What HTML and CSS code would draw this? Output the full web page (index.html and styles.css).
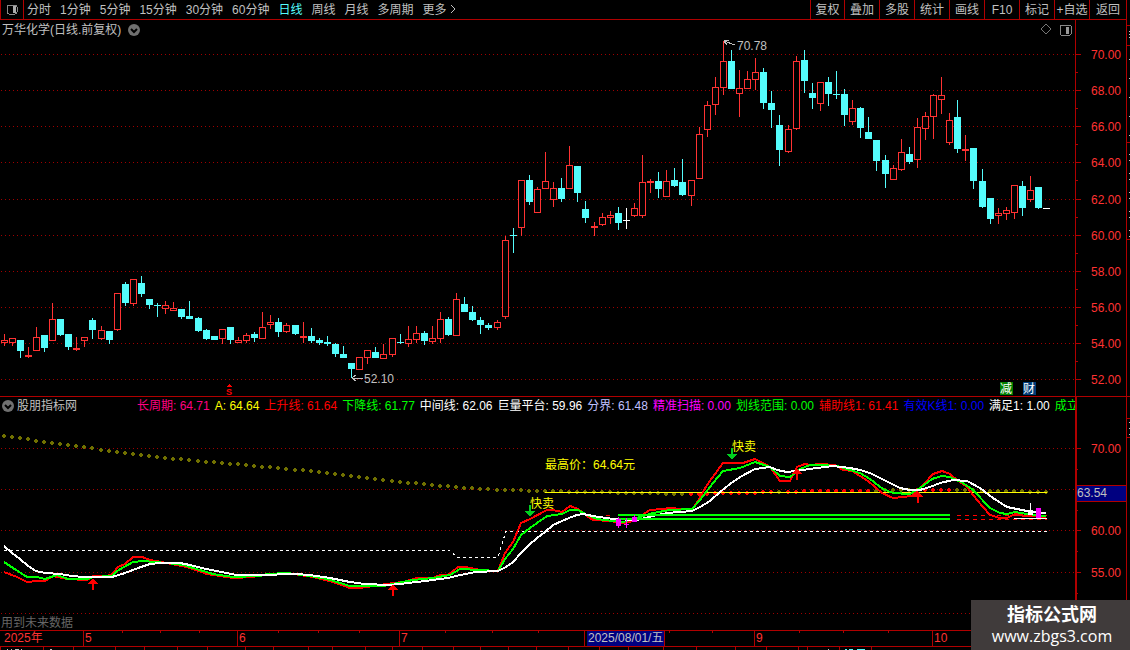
FILE: index.html
```
<!DOCTYPE html>
<html lang="zh-CN">
<head>
  <meta charset="UTF-8">
  <title>万华化学 日线</title>
  <meta name="viewport" content="width=device-width, initial-scale=1.0">
  <link rel="stylesheet" href="styles.css">
</head>
<body>

<div class="terminal">

  <header class="toolbar">
    <button class="layout-btn" aria-label="布局">
      <svg width="12" height="11"><rect x="1" y="1" width="10" height="9" rx="2" fill="none" stroke="#888" stroke-width="1"/><rect x="7" y="2" width="3" height="7" fill="#aaa"/></svg>
    </button>
    <nav class="periods">
      <button>分时</button>
      <button>1分钟</button>
      <button>5分钟</button>
      <button>15分钟</button>
      <button>30分钟</button>
      <button>60分钟</button>
      <button class="active">日线</button>
      <button>周线</button>
      <button>月线</button>
      <button>多周期</button>
      <button>更多 <svg width="6" height="9"><path d="M1 0L5 4L1 8" fill="none" stroke="#c0c0c0"/></svg></button>
    </nav>
    <div class="tools">
      <button>复权</button>
      <button>叠加</button>
      <button>多股</button>
      <button>统计</button>
      <button>画线</button>
      <button>F10</button>
      <button>标记</button>
      <button>+自选</button>
      <button>返回</button>
    </div>
  </header>

  <section class="panel price">
    <div class="panel-head">
      <h1>万华化学(日线.前复权)</h1>
      <button class="chevron" aria-label="展开"><svg width="12" height="12"><circle cx="6" cy="6" r="6" fill="#707070"/><path d="M3 5L6 8L9 5" fill="none" stroke="#000" stroke-width="2"/></svg></button>
      <div class="head-icons">
        <button aria-label="标志"><svg width="11" height="11"><path d="M5 0L10 5L5 10L0 5Z" fill="none" stroke="#777"/></svg></button>
        <button aria-label="侧栏"><svg width="13" height="12"><rect x="1" y="1" width="11" height="10" rx="1" fill="none" stroke="#888"/><rect x="7" y="3" width="3" height="7" fill="#999"/></svg></button>
      </div>
    </div>
    <svg class="plot price-plot" aria-label="K线图">
      <defs>
        <pattern id="dots" width="4" height="1" patternUnits="userSpaceOnUse"><rect x="1" width="1" height="1" fill="#a00000"/></pattern>
      </defs>
      <!-- drawn in screen rows, the header takes the first 38 -->
      <g transform="translate(0 -38)">
        <g id="price-grid"></g>
        <g id="candles"></g>
        <path class="pointer" d="M724 41L735 45M724 41L729 40M724 41L727 45"/>
        <text class="gray" x="737" y="50">70.78</text>
        <path class="pointer" d="M352 378H363M352 378L356 375M352 378L356 381"/>
        <text class="gray" x="364" y="383">52.10</text>
        <path d="M226 387L229 384L232 387Z" fill="#ff0000"/>
        <text class="s-mark" x="226" y="395">S</text>
        <rect x="1000" y="382" width="13" height="13" fill="#008000"/>
        <text class="white" x="1000" y="393">减</text>
        <rect x="1023" y="382" width="13" height="13" fill="#003c78"/>
        <text class="white" x="1023" y="393">财</text>
      </g>
    </svg>
  </section>
  <svg class="axis price-axis" id="price-axis" viewBox="0 20 50 376"></svg>

  <section class="panel indicator">
    <div class="panel-head">
      <button class="chevron" aria-label="展开"><svg width="12" height="12"><circle cx="6" cy="6" r="6" fill="#707070"/><path d="M3 5L6 8L9 5" fill="none" stroke="#000" stroke-width="2"/></svg></button>
      <h2>股朋指标网</h2>
      <div class="values">
        <span class="pink">长周期: 64.71</span>
        <span class="yellow">A: 64.64</span>
        <span class="red">上升线: 61.64</span>
        <span class="green">下降线: 61.77</span>
        <span class="white">中间线: 62.06</span>
        <span class="white">巨量平台: 59.96</span>
        <span class="lilac">分界: 61.48</span>
        <span class="magenta">精准扫描: 0.00</span>
        <span class="green">划线范围: 0.00</span>
        <span class="red">辅助线1: 61.41</span>
        <span class="blue">有效K线1: 0.00</span>
        <span class="white">满足1: 1.00</span>
        <span class="green">成立</span>
      </div>
    </div>
    <svg class="plot indicator-plot" aria-label="指标图">
      <g transform="translate(0 -414)">
        <g id="indicator-grid"></g>
        <g id="long-cycle"></g>
        <rect x="545" y="492" width="502" height="1" fill="#ffff00"/>
        <path class="platform" d="M4 550H449L457 557H498L506 531H1047"/>
        <rect x="606" y="515" width="4" height="1" fill="#ff0000"/>
        <path class="helper" d="M957 515H1047M957 519H1047"/>
        <g id="lines"></g>
        <rect x="618" y="514" width="332" height="2" fill="#00ff00"/>
        <rect x="618" y="518" width="332" height="2" fill="#00ff00"/>
        <rect x="1014" y="518" width="33" height="1" fill="#fff"/>
        <g fill="#ff00ff">
          <rect x="616" y="519" width="5" height="7"/><rect x="618" y="517" width="1" height="11"/>
          <rect x="624" y="524" width="5" height="1"/><rect x="626" y="518" width="1" height="10"/>
          <rect x="632" y="517" width="5" height="5"/><rect x="634" y="515" width="1" height="7"/>
          <rect x="1036" y="508" width="5" height="10"/>
        </g>
        <rect x="1028" y="510" width="5" height="5" fill="#fff"/>
        <rect x="1030" y="503" width="1" height="8" fill="#fff"/>
        <g id="arrows"></g>
        <text class="yellow" x="530" y="508">快卖</text>
        <text class="yellow" x="732" y="451">快卖</text>
        <text class="yellow" x="545" y="469">最高价：64.64元</text>
        <text class="dim" x="1" y="627">用到未来数据</text>
      </g>
    </svg>
  </section>
  <svg class="axis indicator-axis" id="indicator-axis" viewBox="1 397 49 233"></svg>

  <footer class="timeline">
    <svg class="ticks" id="time-ticks"></svg>
    <ol>
      <li>2025年</li>
      <li>5</li>
      <li>6</li>
      <li>7</li>
      <li><time class="cursor-date" datetime="2025-08-01">2025/08/01/五</time></li>
      <li>9</li>
      <li>10</li>
    </ol>
  </footer>
  <svg class="ticker" id="ticker"></svg>

  <svg class="side" id="side" viewBox="0 0 3 650"></svg>

  <div class="watermark">
    <strong>指标公式网</strong>
    <a href="#">www.zbgs3.com</a>
  </div>
</div>

<script src="chart.js"></script>
</body>
</html>
```
FILE: styles.css
```
* {
  box-sizing: border-box;
}

body {
  margin: 0;
  background: #000;
  color: #c0c0c0;
  font-family: "Liberation Sans", "Noto Sans CJK SC", sans-serif;
  font-size: 12px;
  line-height: 16px;
}

button {
  background: none;
  border: none;
  padding: 0;
  color: inherit;
  font: inherit;
  cursor: pointer;
  white-space: nowrap;
}

svg {
  display: block;
  shape-rendering: crispEdges;
}

h1, h2 {
  margin: 0;
  font-size: 12px;
  font-weight: normal;
  white-space: nowrap;
}

.terminal {
  position: relative;
  display: grid;
  grid-template-columns: minmax(0, 1fr) 51px 4px;
  grid-template-rows: auto auto auto auto 3px;
  overflow: hidden;
}

/* toolbar */
.toolbar {
  grid-column: 1 / 3;
  display: flex;
  height: 20px;
  border-bottom: 1px solid #b00000;
}

.layout-btn {
  display: flex;
  align-items: center;
  justify-content: center;
  width: 24px;
  border-left: 1px solid #b00000;
  border-right: 1px solid #b00000;
}

.periods {
  display: flex;
  gap: 9px;
  padding-left: 3px;
}

.periods svg {
  display: inline-block;
}

.periods .active {
  color: #54fcfc;
}

.tools {
  display: flex;
  margin-left: auto;
}

.tools button {
  width: 35px;
  border-left: 1px solid #b00000;
}

.tools button:first-child {
  width: 34px;
}

.tools button:last-child {
  width: 37px;
}

/* panels */
.panel {
  min-width: 0;
}

.panel-head {
  display: flex;
  align-items: center;
}

.price {
  border-bottom: 1px solid #b00000;
}

.price .panel-head {
  height: 18px;
  gap: 7px;
  padding: 1px 3px 0 2px;
}

.head-icons {
  display: flex;
  gap: 7px;
  margin-left: auto;
}

.indicator .panel-head {
  height: 17px;
  gap: 3px;
  padding-left: 2px;
}

.chevron svg,
.chevron path,
.head-icons path {
  shape-rendering: auto;
}

.values {
  display: flex;
  gap: 5px;
  margin-left: 57px;
  overflow: hidden;
  white-space: nowrap;
}

.plot {
  width: 100%;
}

.price-plot {
  height: 358px;
}

.indicator-plot {
  height: 216px;
}

.axis {
  border-left: 1px solid #b00000;
}

.price-axis {
  width: 51px;
  height: 377px;
  border-bottom: 1px solid #b00000;
}

.indicator-axis {
  width: 51px;
  height: 233px;
  border-left-width: 2px;
}

.side {
  grid-column: 3;
  grid-row: 1 / 6;
  width: 4px;
  height: 650px;
  border-left: 1px solid #b00000;
}

text {
  font-size: 12px;
  fill: #ff3232;
}

.gray { fill: #c0c0c0; }
.dim { fill: #666; }
.pink { color: #ff0080; }
.red { color: #ff0000; }
.green { color: #00ff00; }
.white { color: #fff; fill: #fff; }
.yellow { color: #ffff00; fill: #ffff00; }
.lilac { color: #c0c0ff; }
.magenta { color: #ff00ff; }
.blue { color: #0000ff; }

.s-mark {
  font-size: 9px;
  font-weight: bold;
  fill: #ff0000;
}

.pointer {
  fill: none;
  stroke: #c0c0c0;
}

.platform {
  fill: none;
  stroke: #fff;
  stroke-dasharray: 3 3;
}

.helper {
  stroke: #ff0000;
  stroke-dasharray: 4 4;
}

.curve {
  fill: none;
  stroke-width: 2;
}

/* time axis */
.timeline {
  grid-column: 1 / 3;
  position: relative;
  height: 17px;
  border-top: 1px solid #b00000;
  border-bottom: 1px solid #b00000;
}

.timeline ol {
  display: grid;
  grid-template-columns: 83px 154px 162px 185px 170px 178px 1fr;
  margin: 0;
  padding: 0;
  list-style: none;
  color: #ff3232;
  line-height: 15px;
}

.timeline li {
  display: flex;
  padding-left: 1px;
  border-left: 1px solid #b00000;
}

.timeline li:first-child {
  padding-left: 4px;
  border-left: none;
}

.ticks {
  position: absolute;
  width: 100%;
  height: 2px;
}

.cursor-date {
  margin-left: 1px;
  padding: 0 1px;
  border-right: 1px solid #b00000;
  background: #000080;
  color: #c0c0c0;
}

.ticker {
  grid-column: 1 / 3;
  width: 100%;
  height: 3px;
}

.watermark {
  position: absolute;
  right: 0;
  bottom: 0;
  display: flex;
  flex-direction: column;
  align-items: center;
  width: 159px;
  height: 50px;
  padding: 5px 0 0 3px;
  background: #403b3b;
  color: #fff;
}

.watermark strong {
  font-size: 18px;
  line-height: 21px;
}

.watermark a {
  color: #fff;
  font-family: "Open Sans", "Noto Sans", sans-serif;
  font-size: 16px;
  line-height: 20px;
  text-decoration: none;
}
```
FILE: chart.js
```
const NS = "http://www.w3.org/2000/svg";

function add(parent, tag, attrs, text) {
  const el = document.createElementNS(NS, tag);
  for (const key in attrs) el.setAttribute(key, attrs[key]);
  if (text) el.textContent = text;
  document.getElementById(parent).appendChild(el);
}

function box(parent, x, y, width, height, fill) {
  add(parent, "rect", { x, y, width, height, fill });
}

// centre of the n-th bar
function barX(n) {
  return Math.floor(4.06 + n * 8.08217);
}

// kind, high, body top, body bottom, low
const bars = `
r 334 340 342 345|r 338 338 342 345|c 340 340 350 357|r 347 355 356 357|r 327 337 350 350|c 335 335 347 351
r 303 319 340 340|c 319 319 334 335|c 334 334 346 349|r 337 348 349 350|r 337 337 340 346|c 318 320 329 338
r 326 330 338 339|c 331 331 339 343|r 293 293 329 330|c 282 284 302 305|r 279 279 303 305|c 276 283 293 296
c 299 299 304 308|c 303 305 305 316|r 301 305 308 313|r 302 308 310 310|c 309 309 316 318|c 301 316 318 318
c 317 318 330 331|c 329 330 338 339|c 336 336 339 339|r 329 329 338 343|c 327 327 339 343|r 337 340 342 342
r 333 335 340 342|c 332 334 337 341|r 312 327 338 338|r 315 322 324 328|c 318 322 331 336|r 323 325 331 332
c 325 325 333 334|r 322 336 337 342|c 328 336 340 342|c 338 340 342 344|c 336 342 343 345|c 343 344 353 356
c 346 354 357 357|c 363 363 368 377|r 357 357 369 369|r 350 350 357 363|c 347 352 357 357|r 344 354 358 358
r 338 338 354 356|c 334 342 342 343|r 326 339 343 346|r 326 333 339 342|c 331 333 340 344|r 326 338 341 343
r 312 319 338 342|c 317 319 334 335|r 293 299 335 335|c 297 304 311 311|c 306 312 319 320|c 317 320 324 333
c 323 325 327 329|r 320 322 327 329|r 236 240 316 318|c 228 235 235 252|r 180 180 227 235|c 175 180 201 204
r 187 189 212 212|r 152 181 188 188|r 182 188 199 206|c 178 188 198 201|r 146 165 188 188|c 166 166 192 201
c 201 209 217 222|r 222 226 227 235|r 213 217 224 225|r 211 215 217 223|c 207 213 222 229|w 208 220 220 228
r 203 208 215 216|r 155 182 215 217|r 179 181 182 192|c 172 181 188 197|r 170 181 196 196|c 168 180 185 186
c 159 182 194 195|r 180 180 195 205|r 127 134 178 178|r 101 105 129 136|r 77 87 104 114|r 41 61 87 94
c 50 61 88 88|r 70 88 93 116|r 71 79 88 88|r 58 72 79 89|c 68 72 102 108|c 91 103 109 127
c 115 125 149 165|r 125 129 151 152|r 56 61 128 129|c 50 60 80 92|c 83 93 97 108|r 82 82 103 110
c 77 82 93 105|c 71 94 94 98|c 89 94 114 125|r 100 108 121 124|c 107 108 127 137|c 117 132 138 138
c 140 140 160 170|c 155 160 173 187|r 165 168 179 179|r 139 152 169 170|c 147 154 161 163|r 118 127 159 167
r 112 116 128 139|r 94 95 116 138|r 77 95 99 113|r 113 120 142 144|c 100 117 148 152|r 135 149 150 160
c 148 148 180 188|c 169 181 206 207|c 198 198 218 223|r 208 213 215 223|r 207 210 213 219|r 185 185 212 218
c 181 186 207 215|r 176 190 199 201|c 187 187 207 208|w 208 208 208 208`.trim().split(/[|\n]/);

const barColors = { r: "#ff3232", c: "#54fcfc", w: "#ffffff" };

bars.forEach((bar, n) => {
  const [kind, ...ys] = bar.split(" ");
  const [high, top, bottom, low] = ys.map(Number);
  const x = barX(n);
  const color = barColors[kind];
  box("candles", x, high, 1, low - high + 1, color);
  box("candles", x - 3, top, 7, bottom - top + 1, color);
  if (kind === "r" && bottom - top > 1) {
    box("candles", x - 2, top + 1, 5, bottom - top - 1, "#000");
  }
});

// grids and price scales
[54, 90, 126, 162, 199, 235, 271, 307, 343, 379].forEach((y, n) => {
  box("price-grid", 0, y, "100%", 1, "url(#dots)");
  box("price-axis", 0, y, 5, 1, "#b00000");
  if (n < 9) box("price-axis", 0, y + 18, 2, 1, "#b00000");
  add("price-axis", "text", { x: 15, y: y + 5 }, (70 - n * 2).toFixed(2));
});

[448, 489, 530, 572, 613].forEach((y, n) => {
  box("indicator-grid", 0, y, "100%", 1, "url(#dots)");
  box("indicator-axis", 0, y, 5, 1, "#b00000");
  if (n < 4) box("indicator-axis", 0, y + 21, 2, 1, "#b00000");
  if (n !== 1 && n !== 4) {
    add("indicator-axis", "text", { x: 15, y: y + 5 }, (70 - n * 5).toFixed(2));
  }
});
box("indicator-axis", 0, 485, 50, 17, "#b00000");
box("indicator-axis", 0, 486, 50, 15, "#000080");
add("indicator-axis", "text", { x: 1, y: 497, class: "gray" }, "63.54");

// long cycle dots, linear between the knots
const cycle = [[4, 435], [60, 443], [155, 456], [200, 460], [300, 469], [400, 481], [480, 488], [545, 490], [593, 491], [690, 493], [780, 491], [820, 490], [949, 489], [1047, 491]];

for (let n = 0; n < 130; n++) {
  const x = barX(n);
  const k = Math.max(1, cycle.findIndex(p => p[0] >= x));
  const [x0, y0] = cycle[k - 1];
  const [x1, y1] = cycle[k];
  const y = Math.round(y0 + (y1 - y0) * (x - x0) / (x1 - x0));
  const rising = (n > 84 && n < 108 && n !== 96) || (n > 112 && n < 118);
  const fill = rising ? "#ff0000" : "#707000";
  box("long-cycle", x - 1, y - 1, 2, 4, fill);
  box("long-cycle", x - 2, y, 4, 2, fill);
}

const curves = {
  "#ff0000": "4,572 17,577 27,582 37,581 45,581 53,576 67,579 87,580 93,576 107,576 112,574 118,567 125,564 133,557 142,557 150,560 167,563 187,567 207,574 233,578 253,577 267,574 287,573 313,577 333,582 350,588 360,588 373,586 393,583 403,582 417,578 433,578 440,575 448,575 458,567 465,567 480,570 498,571 505,553 513,542 521,523 530,519 547,510 553,510 562,512 570,506 578,509 587,516 593,520 610,521 623,523 633,521 650,510 663,509 670,508 692,510 698,501 707,485 723,463 743,463 755,459 763,463 770,467 780,481 790,481 797,467 805,464 810,465 820,464 835,465 843,470 852,471 868,481 882,493 893,498 912,496 923,485 933,474 942,471 950,474 957,480 967,487 977,500 990,515 1000,518 1007,518 1015,514 1025,516 1046,517",
  "#00ff00": "4,562 13,568 27,577 37,577 45,579 57,575 68,579 87,579 93,577 112,576 117,571 133,562 143,561 167,563 183,565 200,570 213,574 233,577 260,576 267,574 287,573 310,576 327,579 340,583 350,586 383,586 393,584 413,580 433,578 450,575 460,569 480,570 498,571 505,559 513,549 521,535 530,528 547,516 562,514 570,510 578,510 587,515 597,519 613,521 623,522 637,518 653,513 670,510 692,509 700,500 713,483 723,471 740,468 755,462 770,467 780,476 790,477 800,469 810,465 820,465 837,466 850,470 860,473 870,479 883,489 893,493 910,494 920,488 932,479 942,476 950,477 963,483 973,490 990,508 1000,513 1007,514 1015,512 1027,514 1046,516",
  "#ffffff": "4,546 12,553 20,559 28,566 36,571 45,573 60,574 72,576 84,577 112,577 122,574 133,570 141,567 150,564 160,563 180,563 190,565 206,569 222,572 236,575 260,575 295,574 310,575 330,578 350,582 365,584 388,585 400,584 425,581 448,578 460,575 476,572 498,571 506,567 513,562 521,553 529,545 537,538 545,532 553,525 569,518 577,515 583,514 593,516 613,519 637,520 653,516 667,513 692,511 700,507 710,501 720,492 730,484 740,477 755,469 770,467 777,470 787,472 795,471 817,468 833,466 850,468 860,470 870,473 880,478 890,483 900,488 910,490 920,490 930,487 940,483 953,480 967,481 980,488 993,498 1007,507 1027,511 1046,513"
};

for (const color in curves) {
  add("lines", "polyline", { points: curves[color], stroke: color, class: "curve" });
}

// buy arrows point up, sell arrows point down
[[93, 578], [393, 584], [797, 468], [918, 491]].forEach(([x, y]) => {
  add("arrows", "path", { d: `M${x - 5} ${y + 6}L${x} ${y}L${x + 5} ${y + 6}H${x + 1}V${y + 12}H${x - 1}V${y + 6}Z`, fill: "#ff0000" });
});
[[530, 517], [732, 460]].forEach(([x, y]) => {
  add("arrows", "path", { d: `M${x - 5} ${y - 6}L${x} ${y}L${x + 5} ${y - 6}H${x + 1}V${y - 12}H${x - 1}V${y - 6}Z`, fill: "#00d020" });
});

[122, 160, 199, 278, 318, 359, 445, 492, 538, 669, 712, 799, 843, 888].forEach(x => box("time-ticks", x, 0, 1, 2, "#b00000"));
[0, 43, 73, 115, 144, 177, 207, 245, 273, 308, 332, 365, 392, 422, 453, 480, 508, 536, 568, 599, 628, 663, 696, 735, 766, 798, 807, 839, 871].forEach(x => box("ticker", x, 0, 1, 3, "#b00000"));

// tops of the ticker row glyphs
[[7, 1], [11, 1], [15, 4], [21, 1], [50, 2], [828, 1]].forEach(([x, w]) => box("ticker", x, 2, w, 1, "#c0c0c0"));
[[845, 2], [849, 4], [857, 8]].forEach(([x, w]) => box("ticker", x, 2, w, 1, "#54fcfc"));

[25, 45, 142, 239, 396, 418, 437].forEach(y => box("side", 0, y, 3, 1, "#b00000"));
[31, 34, 37, 59, 78, 97, 116, 135, 154, 160, 173, 179, 192, 198, 211, 217, 230, 236, 422, 428, 434].forEach(y => box("side", 2, y, 1, 1, "#c0c0c0"));
```
